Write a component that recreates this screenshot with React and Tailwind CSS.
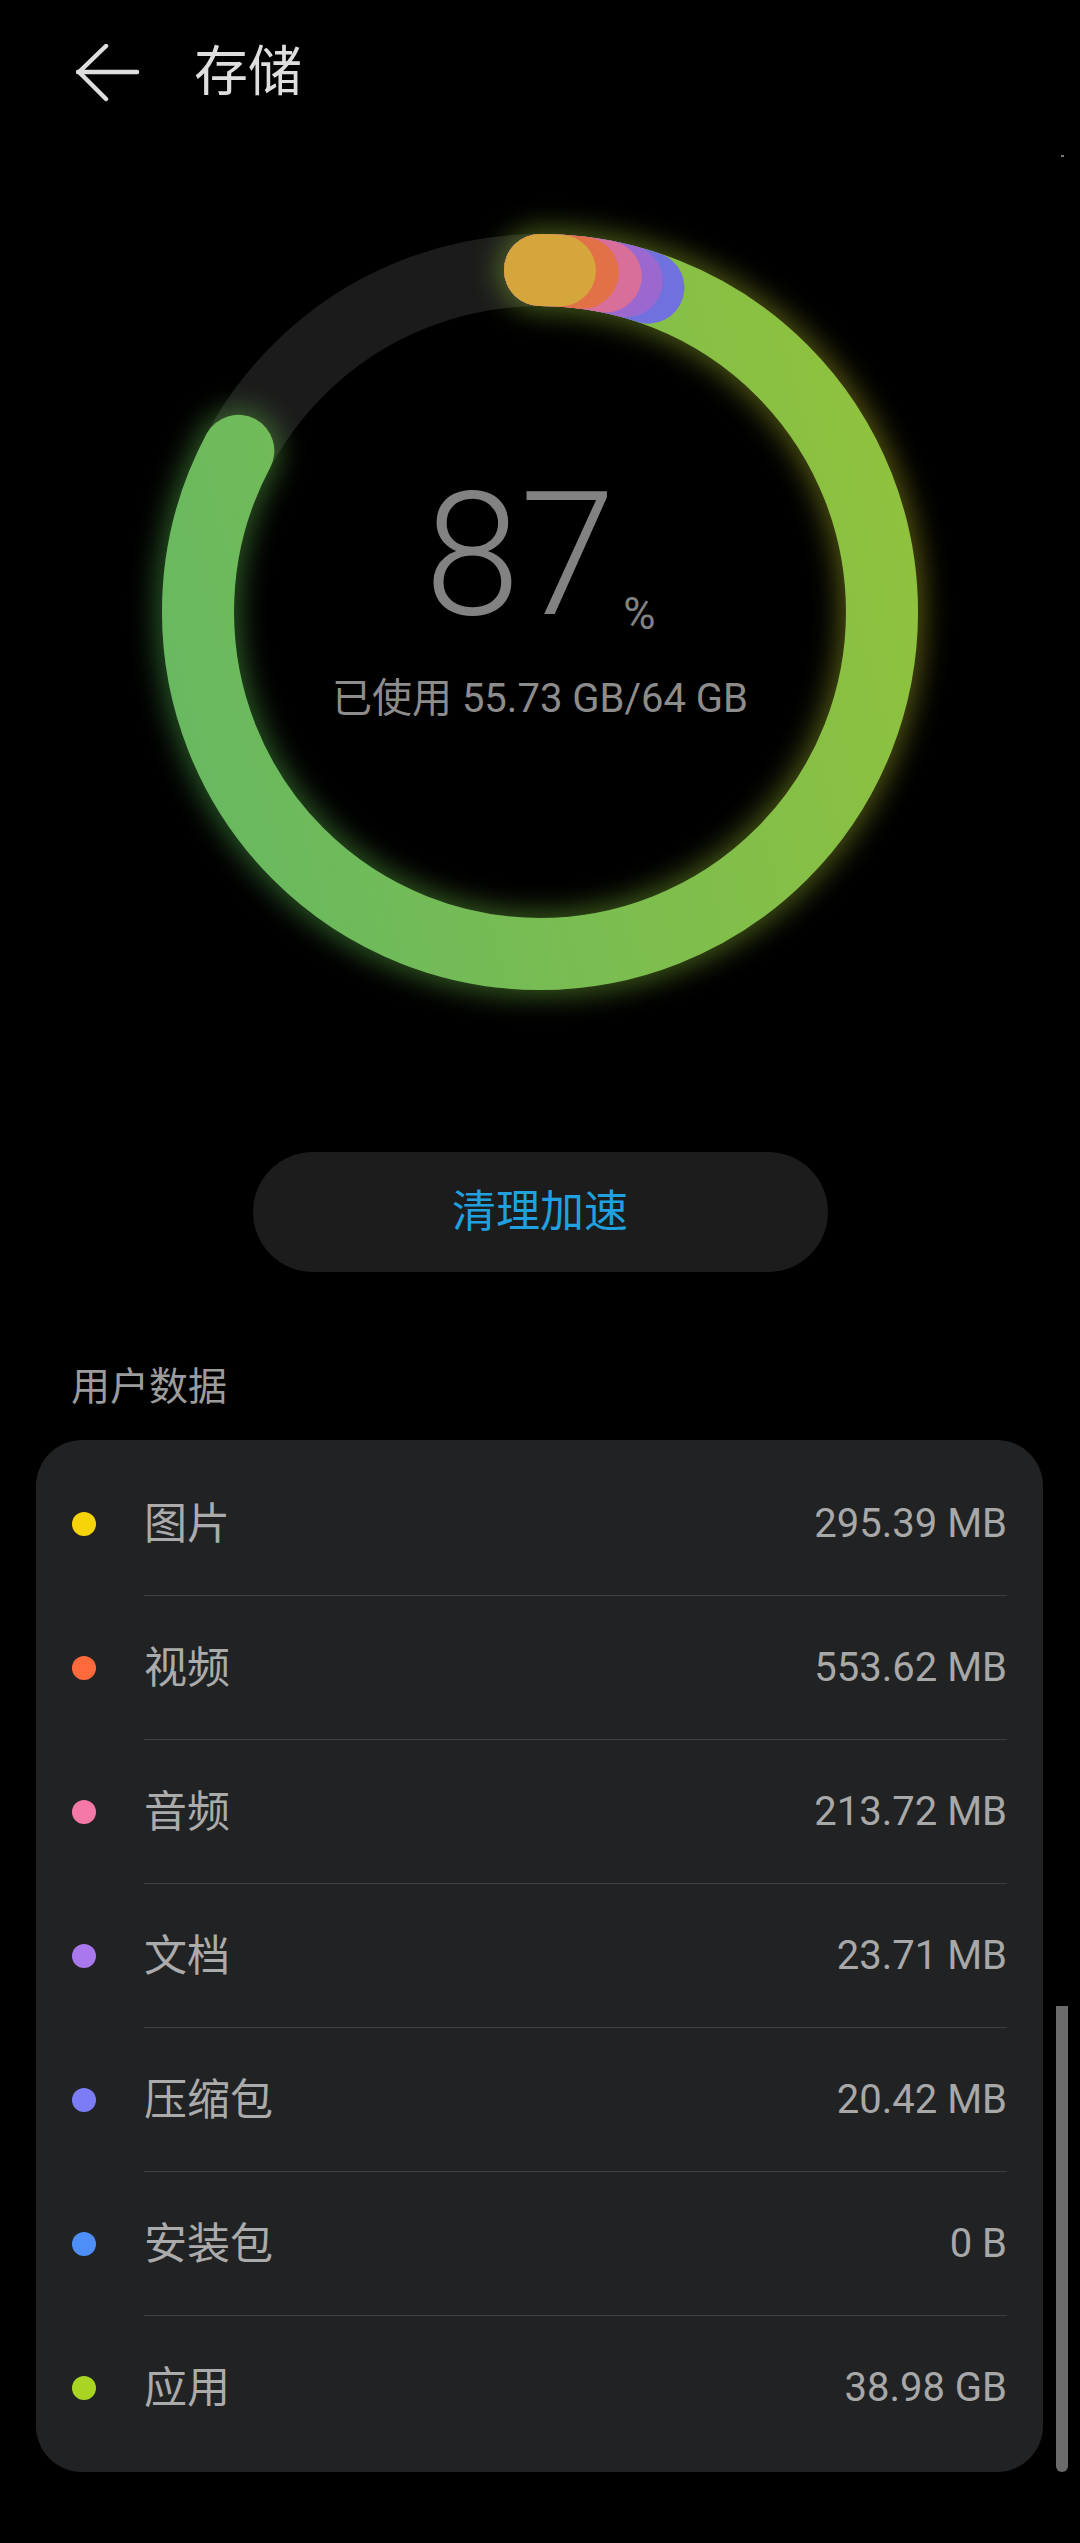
import React from "react";

const R = 342;
const C = 2 * Math.PI * R;
const deg = (d) => (d / 360) * C;

const segments = [
  { color: "url(#greenGrad)", len: deg(298) },
  { color: "#7071de", len: deg(18.5) },
  { color: "#9b68cf", len: deg(14.7) },
  { color: "#d86f9b", len: deg(11.1) },
  { color: "#e27148", len: deg(7.2) },
  { color: "#d5a63b", len: deg(3.35) },
];

const rows = [
  { name: "图片", value: "295.39 MB", dot: "bg-[#f7d30a]" },
  { name: "视频", value: "553.62 MB", dot: "bg-[#ff6a3d]" },
  { name: "音频", value: "213.72 MB", dot: "bg-[#f479a6]" },
  { name: "文档", value: "23.71 MB", dot: "bg-[#a878ec]" },
  { name: "压缩包", value: "20.42 MB", dot: "bg-[#7c7cf6]" },
  { name: "安装包", value: "0 B", dot: "bg-[#4d8ff6]" },
  { name: "应用", value: "38.98 GB", dot: "bg-[#a8d424]" },
];

function Ring() {
  // gradients are defined in the rotated (-90deg) local space of the circles:
  // screen (822,300) -> local (600,822); screen (78,500) -> local (400,78)
  return (
    <svg width="900" height="900" viewBox="0 0 900 900" className="absolute inset-0">
      <defs>
        <linearGradient id="greenGrad" gradientUnits="userSpaceOnUse" x1="600" y1="822" x2="400" y2="78">
          <stop offset="0" stopColor="#90c23d" />
          <stop offset="1" stopColor="#69b960" />
        </linearGradient>
        <linearGradient id="glowGrad" gradientUnits="userSpaceOnUse" x1="600" y1="822" x2="400" y2="78">
          <stop offset="0" stopColor="#b0aa22" />
          <stop offset="0.5" stopColor="#7cb533" />
          <stop offset="1" stopColor="#4fae50" />
        </linearGradient>
        <filter id="glow" x="-20%" y="-20%" width="140%" height="140%">
          <feGaussianBlur stdDeviation="14" />
        </filter>
      </defs>
      <circle cx="450" cy="450" r={R} fill="none" stroke="#1b1b1b" strokeWidth="72" />
      <g transform="rotate(-90 450 450)">
        <circle
          cx="450"
          cy="450"
          r={R}
          fill="none"
          stroke="url(#glowGrad)"
          strokeWidth="84"
          strokeLinecap="round"
          strokeDasharray={`${deg(298)} ${C}`}
          filter="url(#glow)"
          opacity="0.5"
        />
        {segments.map((s, i) => (
          <circle
            key={i}
            cx="450"
            cy="450"
            r={R}
            fill="none"
            stroke={s.color}
            strokeWidth="72"
            strokeLinecap="round"
            strokeDasharray={`${s.len} ${C}`}
          />
        ))}
      </g>
    </svg>
  );
}

export default function App() {
  return (
    <div className="relative w-[1080px] min-h-[2543px] bg-black font-[Roboto,'Noto_Sans_CJK_SC',sans-serif]">
      {/* Header */}
      <div className="flex h-[146px] items-center">
        <svg width="64" height="58" viewBox="0 0 64 58" className="ml-[76px]">
          <path d="M2 28 H61" stroke="#dedede" strokeWidth="4.5" strokeLinecap="round" fill="none" />
          <path d="M30 2 L3 28 L30 55" stroke="#dedede" strokeWidth="4.5" strokeLinecap="round" strokeLinejoin="round" fill="none" />
        </svg>
        <div className="ml-[54px] text-[54px] leading-[54px] text-[#dedede]">存储</div>
      </div>

      {/* Ring */}
      <div className="relative mx-auto mt-[16px] h-[900px] w-[900px]">
        <Ring />
        <div className="relative flex flex-col items-center pt-[307px]">
          <div className="flex items-baseline">
            <span className="text-[172px] leading-[172px] font-light text-[#828282]">87</span>
            <span className="ml-[8px] translate-y-[15px] text-[44px] leading-[44px] text-[#828282]">%</span>
          </div>
          <div className="mt-[36px] text-[40px] leading-[44px] text-[#8c8c8c]">已使用 55.73 GB/64 GB</div>
        </div>
      </div>

      {/* Button */}
      <div className="mx-auto mt-[90px] flex h-[120px] w-[575px] items-center justify-center rounded-full bg-[#1c1c1c]">
        <span className="text-[44px] leading-[44px] text-[#20a0de]">清理加速</span>
      </div>

      {/* Section label */}
      <div className="ml-[71px] mt-[96px] text-[39px] leading-[38px] text-[#9c9c9c]">用户数据</div>

      {/* Card */}
      <div className="ml-[36px] mt-[34px] w-[1007px] rounded-[46px] bg-[#212224] py-[12px]">
        {rows.map((r, i) => (
          <div key={r.name} className="flex h-[144px] pl-[36px]">
            <div className="flex w-[72px] items-center">
              <div className={`h-[24px] w-[24px] rounded-full ${r.dot}`} />
            </div>
            <div
              className={`mr-[36px] flex flex-1 items-center justify-between ${
                i < rows.length - 1 ? "border-b border-[#3e3f41]" : ""
              }`}
            >
              <span className="text-[43px] leading-[42px] text-[#ababab]">{r.name}</span>
              <span className="text-[40px] leading-[40px] text-[#a8a8a8]">{r.value}</span>
            </div>
          </div>
        ))}
      </div>

      {/* Scrollbar overlay */}
      <div className="absolute left-[1056px] top-[2006px] h-[466px] w-[12px] rounded-b-full bg-[#6b6b6b]" />
      <div className="absolute left-[1061px] top-[155px] h-[2px] w-[3px] bg-[#777]" />
    </div>
  );
}
